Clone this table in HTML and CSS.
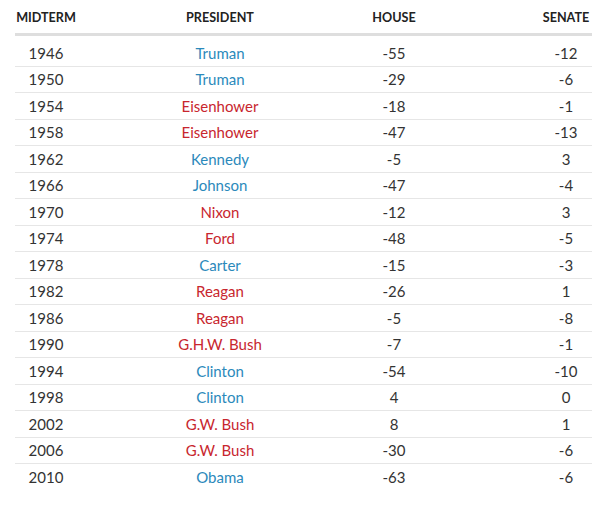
FILE: index.html
```html
<!DOCTYPE html>
<html>
<head>
<meta charset="utf-8">
<link rel="stylesheet" href="styles.css">
</head>
<body>
<div class="table">
  <div class="row head">
    <div class="c1">MIDTERM</div><div class="c2">PRESIDENT</div><div class="c3">HOUSE</div><div class="c4">SENATE</div>
  </div>
  <div class="body">
    <div class="row"><div class="c1">1946</div><div class="c2 dem">Truman</div><div class="c3">-55</div><div class="c4">-12</div></div>
    <div class="row"><div class="c1">1950</div><div class="c2 dem">Truman</div><div class="c3">-29</div><div class="c4">-6</div></div>
    <div class="row"><div class="c1">1954</div><div class="c2 rep">Eisenhower</div><div class="c3">-18</div><div class="c4">-1</div></div>
    <div class="row"><div class="c1">1958</div><div class="c2 rep">Eisenhower</div><div class="c3">-47</div><div class="c4">-13</div></div>
    <div class="row"><div class="c1">1962</div><div class="c2 dem">Kennedy</div><div class="c3">-5</div><div class="c4">3</div></div>
    <div class="row"><div class="c1">1966</div><div class="c2 dem">Johnson</div><div class="c3">-47</div><div class="c4">-4</div></div>
    <div class="row"><div class="c1">1970</div><div class="c2 rep">Nixon</div><div class="c3">-12</div><div class="c4">3</div></div>
    <div class="row"><div class="c1">1974</div><div class="c2 rep">Ford</div><div class="c3">-48</div><div class="c4">-5</div></div>
    <div class="row"><div class="c1">1978</div><div class="c2 dem">Carter</div><div class="c3">-15</div><div class="c4">-3</div></div>
    <div class="row"><div class="c1">1982</div><div class="c2 rep">Reagan</div><div class="c3">-26</div><div class="c4">1</div></div>
    <div class="row"><div class="c1">1986</div><div class="c2 rep">Reagan</div><div class="c3">-5</div><div class="c4">-8</div></div>
    <div class="row"><div class="c1">1990</div><div class="c2 rep">G.H.W. Bush</div><div class="c3">-7</div><div class="c4">-1</div></div>
    <div class="row"><div class="c1">1994</div><div class="c2 dem">Clinton</div><div class="c3">-54</div><div class="c4">-10</div></div>
    <div class="row"><div class="c1">1998</div><div class="c2 dem">Clinton</div><div class="c3">4</div><div class="c4">0</div></div>
    <div class="row"><div class="c1">2002</div><div class="c2 rep">G.W. Bush</div><div class="c3">8</div><div class="c4">1</div></div>
    <div class="row"><div class="c1">2006</div><div class="c2 rep">G.W. Bush</div><div class="c3">-30</div><div class="c4">-6</div></div>
    <div class="row"><div class="c1">2010</div><div class="c2 dem">Obama</div><div class="c3">-63</div><div class="c4">-6</div></div>
  </div>
</div>
</body>
</html>
```
FILE: styles.css
```css
html, body {
  margin: 0;
  padding: 0;
  background: #fff;
}
body {
  font-family: Lato, "Liberation Sans", sans-serif;
  color: #333;
}
.table {
  width: 577px;
  margin-left: 15px;
  padding-top: 10px;
}
.row {
  display: grid;
  grid-template-columns: 62px 286px 62px 1fr;
  align-items: center;
  text-align: center;
}
.row .c4 {
  width: 52px;
  justify-self: end;
}
.head {
  height: 23px;
  border-bottom: 3px solid #dedede;
  font-weight: 700;
  font-size: 12.6px;
  color: #222;
  align-items: start;
}
.body {
  padding-top: 4px;
}
.body .row {
  height: 26.5px;
  box-sizing: border-box;
  border-bottom: 1px solid #e6e6e6;
  font-size: 15px;
}
.body .row:last-child {
  border-bottom: none;
}
.dem { color: #2b89bb; }
.rep { color: #c8262e; }
```
